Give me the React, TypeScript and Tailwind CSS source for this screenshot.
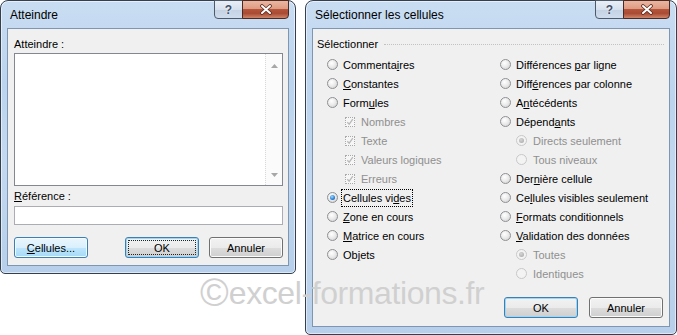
import React from "react";

const UI = "font-['Liberation_Sans',Arial,sans-serif]";

function Radio({ checked = false, disabled = false }: { checked?: boolean; disabled?: boolean }) {
  return (
    <span
      className={`relative inline-block h-[11px] w-[11px] shrink-0 rounded-full border ${
        disabled
          ? "border-[#c8c8c8] bg-[#f3f3f3]"
          : "border-[#8e9094] bg-[radial-gradient(circle_at_40%_35%,#ffffff_0%,#ececec_45%,#cdcdcd_100%)]"
      }`}
    >
      {checked && (
        <span
          className={`absolute left-[2px] top-[2px] h-[5px] w-[5px] rounded-full ${
            disabled
              ? "bg-[radial-gradient(circle_at_40%_35%,#d6d6d6_0%,#a3a3a3_100%)]"
              : "bg-[radial-gradient(circle_at_40%_35%,#9fdcff_0%,#2e86dc_55%,#163f86_100%)]"
          }`}
        />
      )}
    </span>
  );
}

function Check() {
  return (
    <span className="relative inline-block h-[10px] w-[10px] shrink-0 border border-dotted border-[#a9a9a9] bg-[#f6f6f6]">
      <svg viewBox="0 0 8 8" className="absolute left-0 top-0 h-[8px] w-[8px]">
        <path d="M1.3 4.2 L3.2 6.2 L6.8 1.2" stroke="#b9b9b9" strokeWidth="1.3" fill="none" />
      </svg>
    </span>
  );
}

type RowProps = {
  kind: "radio" | "check";
  checked?: boolean;
  disabled?: boolean;
  sub?: "left" | "right";
  focus?: boolean;
  children: React.ReactNode;
};

function Row({ kind, checked, disabled, sub, focus, children }: RowProps) {
  const pad = sub === "left" ? "pl-[18px] gap-[6px]" : sub === "right" ? "pl-[16px] gap-[6px]" : "gap-[5px]";
  return (
    <div className={`flex h-[19px] items-center ${pad}`}>
      {kind === "radio" ? <Radio checked={checked} disabled={disabled} /> : <Check />}
      <span
        className={`whitespace-nowrap ${disabled ? "text-[#8f8f8f]" : "text-black"} ${
          focus ? "outline outline-1 outline-dotted outline-black outline-offset-[1px]" : ""
        }`}
      >
        {children}
      </span>
    </div>
  );
}

function Btn({
  children,
  variant = "normal",
  className = "",
}: {
  children: React.ReactNode;
  variant?: "normal" | "hover" | "default" | "focus";
  className?: string;
}) {
  const v =
    variant === "hover"
      ? "border-[#3c7fb1] bg-[linear-gradient(180deg,#eaf6fd_0%,#d9f0fc_50%,#bee6fd_51%,#a7d9f5_100%)] shadow-[inset_0_0_0_1px_#f4fbff]"
      : variant === "default" || variant === "focus"
      ? "border-[#3c7fb1] bg-[linear-gradient(180deg,#f2f2f2_0%,#ebebeb_50%,#dddddd_51%,#cfcfcf_100%)] shadow-[inset_0_0_0_1px_#9fd6f3]"
      : "border-[#707070] bg-[linear-gradient(180deg,#f2f2f2_0%,#ebebeb_50%,#dddddd_51%,#cfcfcf_100%)] shadow-[inset_0_0_0_1px_#fbfbfb]";
  return (
    <div
      className={`relative flex h-[21px] w-[74px] items-center justify-center rounded-[3px] border text-black ${v} ${className}`}
    >
      {variant === "focus" && (
        <span className="absolute inset-[2px] rounded-[1px] border border-dotted border-[#222]" />
      )}
      <span className="relative">{children}</span>
    </div>
  );
}

function TitleButtons() {
  return (
    <div className="ml-auto mr-[6px] mt-[-1px] flex">
      <div className="flex h-[19px] w-[29px] items-center justify-center rounded-bl-[4px] border border-[#4f5a69] bg-[linear-gradient(180deg,#e9eff6_0%,#d6e1ee_50%,#c3d2e3_51%,#cfdced_100%)]">
        <span className="text-[12px] font-bold leading-none text-[#3f5069] [text-shadow:0_0_2px_#ffffff]">?</span>
      </div>
      <div className="ml-[-1px] flex h-[19px] w-[47px] items-center justify-center rounded-br-[4px] border border-[#4a2a22] bg-[linear-gradient(180deg,#ebb6a1_0%,#de9c83_45%,#b5553b_50%,#a94a33_72%,#cf8468_100%)]">
        <svg viewBox="0 0 14 11" className="h-[11px] w-[14px]">
          <path d="M3 2 L11 9 M11 2 L3 9" stroke="#5a2a1e" strokeWidth="3.6" strokeLinecap="round" />
          <path d="M3 2 L11 9 M11 2 L3 9" stroke="#ffffff" strokeWidth="2" strokeLinecap="round" />
        </svg>
      </div>
    </div>
  );
}

function Frame({
  title,
  size,
  children,
}: {
  title: string;
  size: string;
  children: React.ReactNode;
}) {
  return (
    <div
      className={`relative flex shrink-0 flex-col rounded-t-[8px] rounded-b-[5px] border border-[#34404f] bg-[linear-gradient(180deg,#c9ddf2_0%,#bcd4ee_30%,#c4d9f0_60%,#b7cfea_100%)] shadow-[inset_0_0_0_1px_rgba(255,255,255,0.55)] ${size}`}
    >
      <div className="flex h-[27px] items-start">
        <div className="pl-[9px] pt-[7px] text-[12px] leading-[15px] text-black">{title}</div>
        <TitleButtons />
      </div>
      <div className="mx-[6px] mb-[7px] flex-1 border border-[#7f96b2] bg-[#f0f0f0]">{children}</div>
    </div>
  );
}

function Arrow({ up }: { up?: boolean }) {
  return (
    <svg viewBox="0 0 7 4" className="h-[4px] w-[7px]">
      <path d={up ? "M0 4 L3.5 0 L7 4 Z" : "M0 0 L3.5 4 L7 0 Z"} fill="#a7a7a7" />
    </svg>
  );
}

export default function App() {
  return (
    <div className={`relative h-[335px] w-[677px] overflow-hidden bg-white ${UI} text-[11px] leading-[14px] text-black`}>
      <div className="flex items-start gap-[9px]">
        <Frame title="Atteindre" size="h-[274px] w-[296px]">
          <div className="flex h-full flex-col pl-[6px] pr-[5px] pt-[8px]">
            <div>Atteindre :</div>
            <div className="mt-[2px] flex h-[133px] border border-[#828790] bg-white">
              <div className="flex-1" />
              <div className="flex w-[17px] flex-col items-center justify-between border-l border-dotted border-[#d9d9d9] bg-[#fbfbfb] pb-[8px] pt-[10px]">
                <Arrow up />
                <Arrow />
              </div>
            </div>
            <div className="mt-[3px]">
              <u>R</u>éférence :
            </div>
            <div className="mt-[3px] h-[19px] border border-[#abadb3] bg-white" />
            <div className="mt-[12px] flex">
              <Btn variant="hover">
                <u>C</u>ellules...
              </Btn>
              <Btn variant="focus" className="ml-auto">
                OK
              </Btn>
              <Btn className="ml-[10px]">Annuler</Btn>
            </div>
          </div>
        </Frame>

        <Frame title="Sélectionner les cellules" size="h-[335px] w-[372px]">
          <div className="flex h-full flex-col pt-[8px]">
            <div className="flex items-center pl-[4px] pr-[5px]">
              <span>Sélectionner</span>
              <span className="ml-[6px] flex-1 border-t border-dotted border-[#c2c2c2]" />
            </div>
            <div className="mt-[4px] flex pl-[14px]">
              <div className="w-[173px]">
                <Row kind="radio">
                  Commenta<u>i</u>res
                </Row>
                <Row kind="radio">
                  <u>C</u>onstantes
                </Row>
                <Row kind="radio">
                  Form<u>u</u>les
                </Row>
                <Row kind="check" sub="left" disabled>
                  Nombres
                </Row>
                <Row kind="check" sub="left" disabled>
                  Texte
                </Row>
                <Row kind="check" sub="left" disabled>
                  Valeurs logiques
                </Row>
                <Row kind="check" sub="left" disabled>
                  Erreurs
                </Row>
                <Row kind="radio" checked focus>
                  Cellules vi<u>d</u>es
                </Row>
                <Row kind="radio">
                  <u>Z</u>one en cours
                </Row>
                <Row kind="radio">
                  <u>M</u>atrice en cours
                </Row>
                <Row kind="radio">
                  Ob<u>j</u>ets
                </Row>
              </div>
              <div>
                <Row kind="radio">
                  Différences <u>p</u>ar ligne
                </Row>
                <Row kind="radio">
                  Diff<u>é</u>rences par colonne
                </Row>
                <Row kind="radio">
                  A<u>n</u>técédents
                </Row>
                <Row kind="radio">
                  Dépend<u>a</u>nts
                </Row>
                <Row kind="radio" sub="right" checked disabled>
                  Directs seulement
                </Row>
                <Row kind="radio" sub="right" disabled>
                  Tous niveaux
                </Row>
                <Row kind="radio">
                  Der<u>n</u>ière cellule
                </Row>
                <Row kind="radio">
                  Ce<u>l</u>lules visibles seulement
                </Row>
                <Row kind="radio">
                  <u>F</u>ormats conditionnels
                </Row>
                <Row kind="radio">
                  <u>V</u>alidation des données
                </Row>
                <Row kind="radio" sub="right" checked disabled>
                  Toutes
                </Row>
                <Row kind="radio" sub="right" disabled>
                  Identiques
                </Row>
              </div>
            </div>
            <div className="mt-[14px] flex justify-end gap-[11px] pr-[6px]">
              <Btn variant="default">OK</Btn>
              <Btn>Annuler</Btn>
            </div>
          </div>
        </Frame>
      </div>

      <div className="pointer-events-none absolute left-[200px] top-[273px] flex items-center text-[#d0d0d0]">
        <span className="text-[39px] leading-none">©</span>
        <span className="text-[32px] leading-none tracking-[-0.4px]">excel-formations.fr</span>
      </div>
    </div>
  );
}
